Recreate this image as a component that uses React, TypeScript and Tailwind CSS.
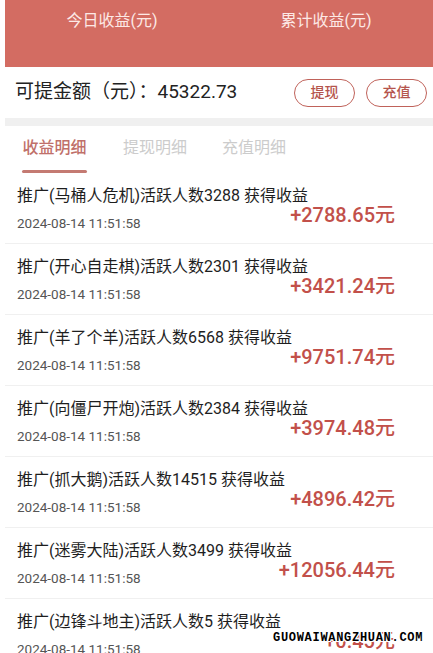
import React from "react";

const records = [
    { name: "马桶人危机", count: 3288, amount: "2788.65" },
    { name: "开心自走棋", count: 2301, amount: "3421.24" },
    { name: "羊了个羊", count: 6568, amount: "9751.74" },
    { name: "向僵尸开炮", count: 2384, amount: "3974.48" },
    { name: "抓大鹅", count: 14515, amount: "4896.42" },
    { name: "迷雾大陆", count: 3499, amount: "12056.44" },
    { name: "边锋斗地主", count: 5, amount: "0.45" },
];

export default function App() {
    return (
        <div
            className="relative w-[433px] h-[653px] overflow-hidden bg-white pl-[5px]"
            style={{ fontFamily: 'Roboto, "Noto Sans CJK SC", sans-serif' }}
        >
            {/* header */}
            <div className="h-[67px] bg-[#d36c62] grid grid-cols-2 pt-[10px]">
                <div className="text-center text-[16px] leading-[22px] text-[#fde9e6]">今日收益(元)</div>
                <div className="text-center text-[16px] leading-[22px] text-[#fde9e6]">累计收益(元)</div>
            </div>

            {/* balance */}
            <div className="h-[51px] flex items-center justify-between pl-[10px] pr-[6px]">
                <div className="text-[19px] text-[#222]">可提金额（元）：45322.73</div>
                <div className="flex gap-[11px]">
                    <button className="w-[61px] h-[28px] rounded-full border-[1.5px] border-[#c0625a] text-[14px] text-[#b5554d] font-medium">提现</button>
                    <button className="w-[61px] h-[28px] rounded-full border-[1.5px] border-[#c0625a] text-[14px] text-[#b5554d] font-medium">充值</button>
                </div>
            </div>

            <div className="h-[8px] bg-[#f0f0f0]" />

            {/* tabs */}
            <div className="h-[47px] flex gap-[36px] pl-[17px] pt-[12px]">
                <div className="flex flex-col items-center w-[65px]">
                    <span className="text-[16px] leading-[20px] text-[#c0706a] font-medium whitespace-nowrap">收益明细</span>
                    <span className="mt-[12px] h-[3px] w-[65px] rounded-full bg-[#c47a72]" />
                </div>
                <span className="w-[63px] text-[16px] leading-[20px] text-[#cccccc] whitespace-nowrap">提现明细</span>
                <span className="w-[63px] text-[16px] leading-[20px] text-[#cccccc] whitespace-nowrap">充值明细</span>
            </div>

            {/* list */}
            <div>
                {records.map((r, i) => (
                    <div key={i} className="h-[71px] border-b-[1.5px] border-[#f0f0f0] flex items-start pl-[12px] pr-[38px] pt-[14px]">
                        <div className="flex-1 w-0 flex flex-col">
                            <span className="text-[16px] leading-[18px] text-[#1e1e1e] whitespace-nowrap">
                                推广({r.name})活跃人数{r.count} 获得收益
                            </span>
                            <span className="mt-[10px] text-[13.5px] leading-[16px] text-[#555] whitespace-nowrap">2024-08-14 11:51:58</span>
                        </div>
                        <span className="mt-[16px] text-[20px] leading-[24px] font-medium text-[#c2504a] whitespace-nowrap">
                            +{r.amount}元
                        </span>
                    </div>
                ))}
            </div>

            {/* watermark */}
            <div
                className="absolute left-[273px] top-[629px] text-[12px] font-bold tracking-[0.7px] text-black"
                style={{
                    fontFamily: '"Liberation Mono", monospace',
                    textShadow: "1px 0 #fff, -1px 0 #fff, 0 1px #fff, 0 -1px #fff, 1px 1px #fff, -1px -1px #fff, 1px -1px #fff, -1px 1px #fff",
                }}
            >
                GUOWAIWANGZHUAN.COM
            </div>
        </div>
    );
}
